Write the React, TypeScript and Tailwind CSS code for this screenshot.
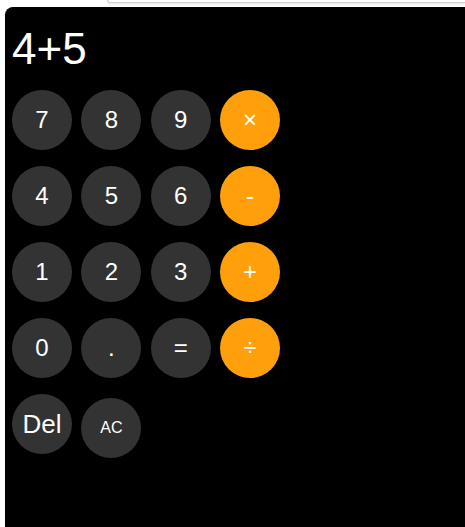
const rows: { label: string; kind: 'num' | 'op' }[][] = [
  [
    { label: '7', kind: 'num' },
    { label: '8', kind: 'num' },
    { label: '9', kind: 'num' },
    { label: '×', kind: 'op' },
  ],
  [
    { label: '4', kind: 'num' },
    { label: '5', kind: 'num' },
    { label: '6', kind: 'num' },
    { label: '-', kind: 'op' },
  ],
  [
    { label: '1', kind: 'num' },
    { label: '2', kind: 'num' },
    { label: '3', kind: 'num' },
    { label: '+', kind: 'op' },
  ],
  [
    { label: '0', kind: 'num' },
    { label: '.', kind: 'num' },
    { label: '=', kind: 'num' },
    { label: '÷', kind: 'op' },
  ],
];

function Key({
  label,
  kind,
  className = 'text-[24px]',
}: {
  label: string;
  kind: 'num' | 'op';
  className?: string;
}) {
  return (
    <button
      type="button"
      className={`flex h-[60px] w-[60px] shrink-0 items-center justify-center rounded-full text-white ${
        kind === 'op' ? 'bg-[#fe9f0b]' : 'bg-[#333333]'
      } ${className}`}
    >
      {label}
    </button>
  );
}

export default function App() {
  return (
    <div className="h-[527px] overflow-hidden bg-white font-['Liberation_Sans',Arial,sans-serif]">
      {/* edge of the box above, peeking in */}
      <div className="ml-[107px] h-[3px] rounded-bl-[5px] border-b border-l border-[#cfcfcf] bg-white shadow-[0_2px_2px_rgba(0,0,0,0.07)]" />

      <div className="ml-[5px] mr-[-12px] mt-[4px] h-[540px] rounded-lg bg-black pl-[7px] pt-[17px]">
        <div className="h-[49px] text-[44px] leading-[49px] text-white">4+5</div>

        <div className="mt-[17px] flex flex-col gap-4">
          {rows.map((row, i) => (
            <div key={i} className="flex gap-[9.33px]">
              {row.map((k) => (
                <Key key={k.label} label={k.label} kind={k.kind} />
              ))}
            </div>
          ))}
          <div className="flex items-start gap-[9.33px]">
            <Key label="Del" kind="num" className="text-[26px]" />
            <Key label="AC" kind="num" className="mt-1 text-[16px]" />
          </div>
        </div>
      </div>
    </div>
  );
}
